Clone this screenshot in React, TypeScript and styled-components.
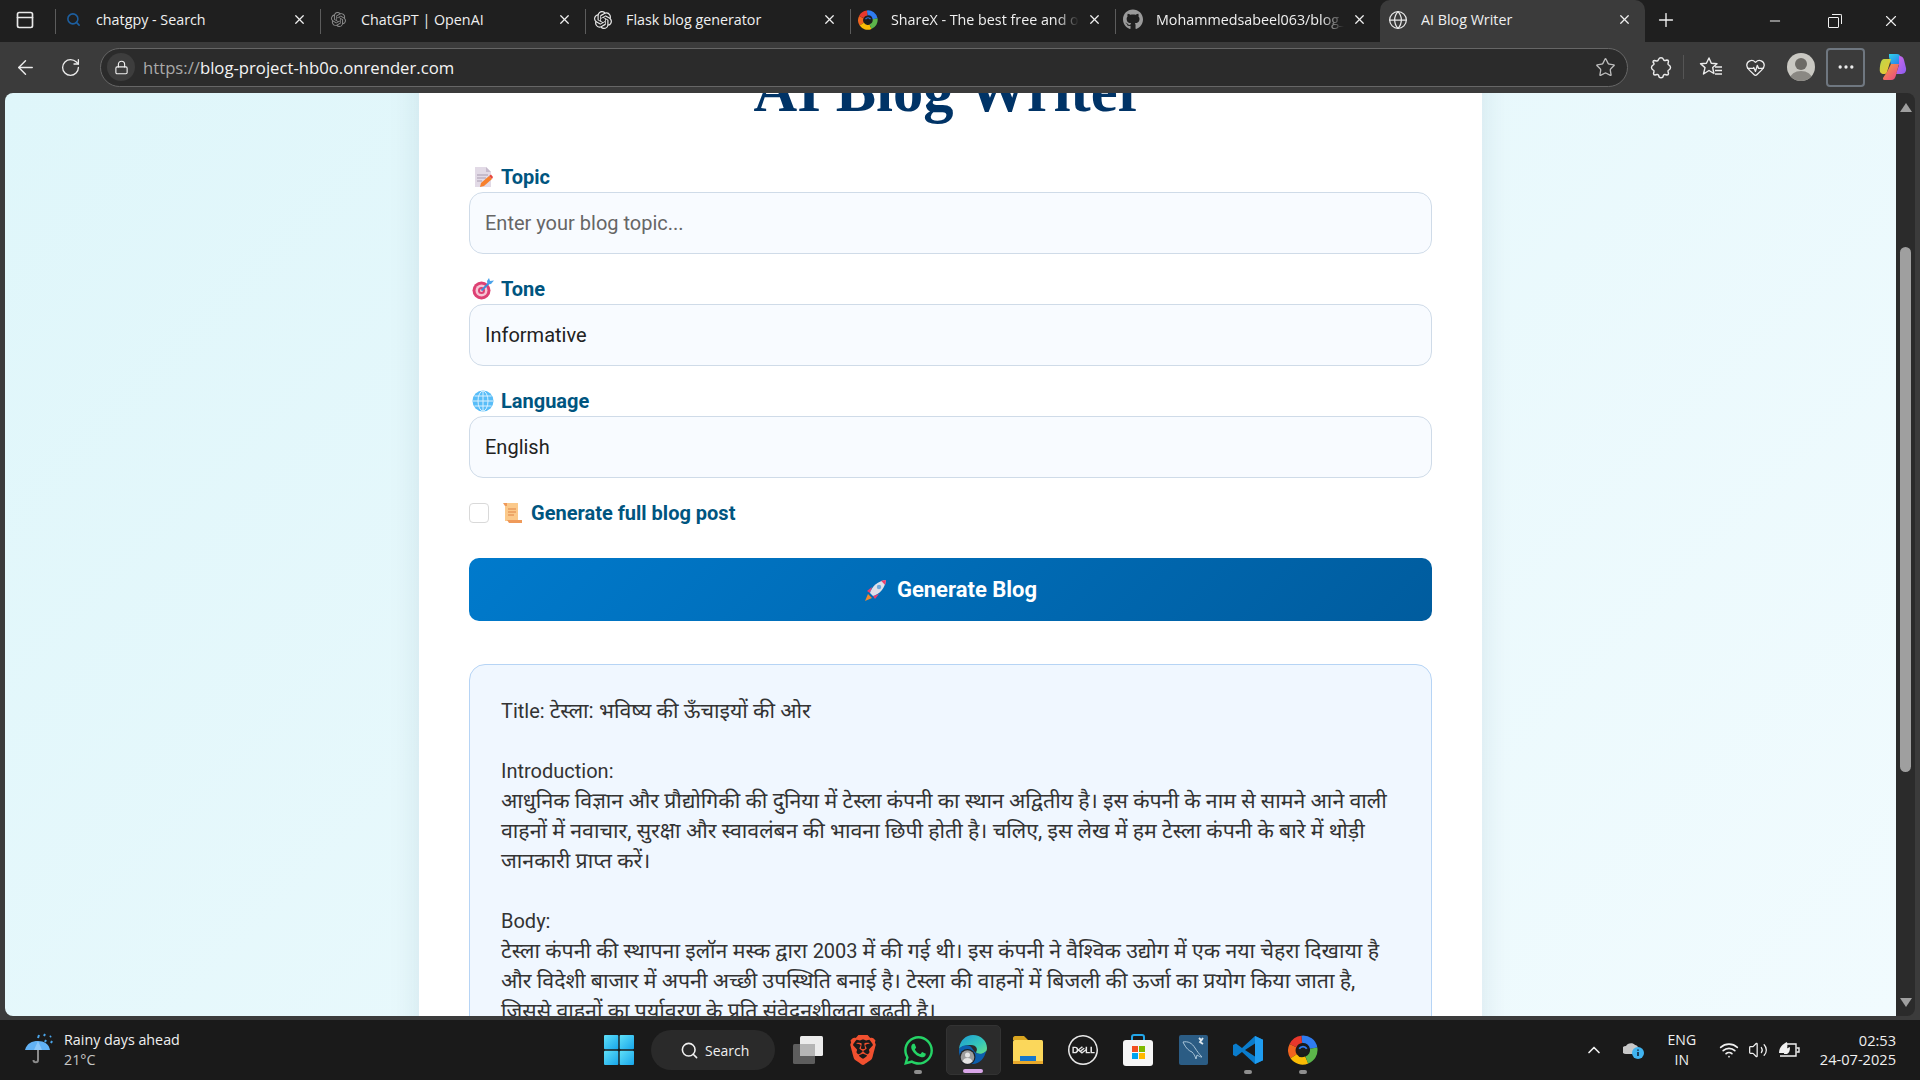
import React from 'react';
import styled, { createGlobalStyle, css } from 'styled-components';
import {
    ArrowLeft, ChevronUp, Ellipsis, Globe, HeartPulse, Lock, Minus, PanelTop, Plus,
    RotateCw, Search, Star, Volume2, Wifi, X,
} from 'lucide-react';
import { FaGithub, FaWhatsapp } from 'react-icons/fa';
import { SiBrave, SiDell, SiOpenai } from 'react-icons/si';

const GlobalStyle = createGlobalStyle`
    html, body {
        margin: 0;
        height: 100%;
        overflow: hidden;
        background: #3b3b3b;
    }
    * { box-sizing: border-box; }
`;

const UI_FONT = `"Open Sans", "Noto Sans", sans-serif`;
const PAGE_FONT = `Roboto, "Noto Sans", sans-serif`;

/** ____________________________________________________    DRAWN ICONS
 * */
const SwirlIcon = ({size = 20}: {size?: number}) => (
    <svg width={size} height={size} viewBox="0 0 24 24" fill="none">
        <path d="M11 3.500a8.500 8.500 0 0 1 9.500 7" stroke="#2f7cf0" strokeWidth="6"/>
        <path d="M4 8.500a8.500 8.500 0 0 1 7-5" stroke="#e8372c" strokeWidth="6"/>
        <path d="M4.500 17a8.500 8.500 0 0 1-.5-8.500" stroke="#f0641e" strokeWidth="6"/>
        <path d="M15 20a8.500 8.500 0 0 1-10.500-3" stroke="#fbbc05" strokeWidth="6"/>
        <path d="M20.500 10.500a8.500 8.500 0 0 1-5.500 9.500" stroke="#5cb54a" strokeWidth="6"/>
        <ellipse cx="12" cy="12" rx="4.200" ry="3.600" fill="#1c1c1c"/>
        <path d="M9 11a3.500 3.500 0 0 1 6 0" stroke="#2f7cf0" strokeWidth="1.400"/>
    </svg>
);

const CopilotIcon = () => (
    <svg width="28" height="30" viewBox="0 0 28 30">
        <defs>
            <linearGradient id="copA" x1="0" y1="0" x2="1" y2="1">
                <stop offset="0" stopColor="#2fd3e8"/>
                <stop offset="1" stopColor="#2a6cf0"/>
            </linearGradient>
            <linearGradient id="copB" x1="0" y1="0" x2="1" y2="1">
                <stop offset="0" stopColor="#d56be8"/>
                <stop offset="1" stopColor="#8a5cf0"/>
            </linearGradient>
            <linearGradient id="copC" x1="0" y1="0" x2="1" y2="1">
                <stop offset="0" stopColor="#b9d84a"/>
                <stop offset="1" stopColor="#f4c430"/>
            </linearGradient>
            <linearGradient id="copD" x1="0" y1="0" x2="1" y2="1">
                <stop offset="0" stopColor="#f8a13a"/>
                <stop offset="1" stopColor="#e8408a"/>
            </linearGradient>
        </defs>
        <path d="M10 2h8c2 0 3 1 3.600 3l2 8H12L10 5z" fill="url(#copA)"/>
        <path d="M20 4c3 0 4.400 1.600 5 4l2 8c.6 3-1 6-4.600 6H17l3-9z" fill="url(#copB)"/>
        <path d="M5 7h7l-4 13c-.4 1.600-1.400 2-3 2-3 0-4.600-2-4.200-5C1 13 2 7 5 7z" fill="url(#copC)"/>
        <path d="M8 20l4-8h8l-3 11c-.6 3-2 5-5 5H5.600c-2 0-2-2-1-3z" fill="url(#copD)"/>
    </svg>
);

const ExtensionIcon = () => (
    <svg width="24" height="24" viewBox="0 0 24 24" fill="none" stroke="#ececec" strokeWidth="1.400" strokeLinejoin="round">
        <path d="M9.500 4.500a2.700 2.700 0 0 1 5 0c.3.900 1 1.200 1.800 1l1.700-.5c1 0 1.500.5 1.500 1.500l-.5 2c-.2.800.2 1.400 1 1.700a2.500 2.500 0 0 1 0 4.600c-.8.300-1.200.9-1 1.700l.5 2c0 1-.5 1.500-1.500 1.500l-2-.5c-.8-.2-1.400.2-1.700 1a2.300 2.300 0 0 1-4.600 0c-.3-.8-.9-1.200-1.700-1l-2 .5c-1 0-1.500-.5-1.500-1.500l.5-2c.2-.8-.2-1.400-1-1.700a2.500 2.500 0 0 1 0-4.600c.8-.3 1.200-.9 1-1.700L4 7c0-1 .5-1.500 1.500-1.500l2.200.5c.8.200 1.500-.5 1.800-1.500z"/>
    </svg>
);

const FavoritesIcon = () => (
    <svg width="24" height="24" viewBox="0 0 24 24" fill="none" stroke="#ececec" strokeWidth="1.400" strokeLinejoin="round">
        <path d="M10 3l2.300 5.200 5.700.6-4.300 3.800 1.200 5.900-4.900-3-5.500 3.500 1.500-6.400L1.500 8.800l5.900-.6z"/>
        <path d="M16 12h7M16 15.500h7M16 19h7"/>
    </svg>
);

const MemoEmoji = () => (
    <svg width="20" height="22" viewBox="0 0 20 22">
        <path d="M2 1h11l5 5v15H2z" fill="#e2dae6"/>
        <path d="M13 1l5 5h-5z" fill="#c5bacc"/>
        <path d="M4 9h11M4 12h9M4 15h5" stroke="#a89bb0" strokeWidth="1.200"/>
        <path d="M7 21l1-4 8-7 3 3-8 7z" fill="#f7802d"/>
        <path d="M16 10l2-1.500 2 2.500-1 2z" fill="#e8453c"/>
    </svg>
);

const TargetEmoji = () => (
    <svg width="22" height="22" viewBox="0 0 22 22">
        <circle cx="9.500" cy="12.500" r="9" fill="#dd4073"/>
        <circle cx="9.500" cy="12.500" r="6" fill="#f6c4d4"/>
        <circle cx="9.500" cy="12.500" r="3.500" fill="#dd4073"/>
        <circle cx="9.500" cy="12.500" r="1.500" fill="#f6c4d4"/>
        <path d="M9.500 12.500L17 5" stroke="#3d8bd9" strokeWidth="1.800"/>
        <path d="M15 3l2-3 1 3 4-.5-3 3.500-3.500.5z" fill="#4aa3ea"/>
    </svg>
);

const GlobeEmoji = () => (
    <svg width="22" height="22" viewBox="0 0 22 22" fill="none">
        <circle cx="11" cy="11" r="10.500" fill="#58bdf8"/>
        <ellipse cx="11" cy="11" rx="5" ry="10" stroke="#d7f0ff" strokeWidth="1"/>
        <path d="M11 1v20M1 11h20M2.500 6h17M2.500 16h17" stroke="#d7f0ff" strokeWidth="1"/>
    </svg>
);

const ScrollEmoji = () => (
    <svg width="20" height="22" viewBox="0 0 20 22">
        <rect x="3" y="1" width="13" height="18" fill="#fbc98a"/>
        <path d="M1 1h4v3H3z" fill="#ef9a5a"/>
        <path d="M6 7h8M6 10h8M6 13h6" stroke="#e99a5c" strokeWidth="1.300"/>
        <path d="M5 18h15v3H7z" fill="#ef9a5a"/>
    </svg>
);

const RocketEmoji = () => (
    <svg width="24" height="24" viewBox="0 0 24 24">
        <path d="M4 16l-3 7 7-3z" fill="#f4892c"/>
        <path d="M3 13l5-4-2 6zM11 21l4-5-6 2z" fill="#ef3f6c"/>
        <path d="M6 15C8 8 14 3 22 2c-1 8-6 14-13 16z" fill="#dfe0ea"/>
        <path d="M17 2.800l5-.8-.8 5z" fill="#ef3f6c"/>
        <circle cx="15" cy="9" r="2.200" fill="#6fa8dc"/>
    </svg>
);

const UmbrellaIcon = () => (
    <svg width="30" height="34" viewBox="0 0 30 34" fill="none">
        <path d="M14 16v11c0 3-4.500 3-4.500 0" stroke="#8a8a8a" strokeWidth="2"/>
        <path d="M1 17C3 10 8 8 14 8s11 3 12 9z" fill="#62b2f5"/>
        <path d="M14 8l-4 9h8z" fill="#8cc8fa"/>
        <path d="M14 5l1-3M20 3l1-2M21 9l1-2M27 10l1-2M26 4l1-1" stroke="#4aa5ea" strokeWidth="2"/>
    </svg>
);

const WindowsLogo = () => (
    <svg width="30" height="30" viewBox="0 0 30 30">
        <defs>
            <linearGradient id="winA" x1="0" y1="0" x2="1" y2="1">
                <stop offset="0" stopColor="#5fe0f8"/>
                <stop offset="1" stopColor="#17a5ea"/>
            </linearGradient>
        </defs>
        <rect width="14.300" height="14.300" rx="1" fill="url(#winA)"/>
        <rect x="15.700" width="14.300" height="14.300" rx="1" fill="url(#winA)"/>
        <rect y="15.700" width="14.300" height="14.300" rx="1" fill="url(#winA)"/>
        <rect x="15.700" y="15.700" width="14.300" height="14.300" rx="1" fill="url(#winA)"/>
    </svg>
);

const TaskViewIcon = () => (
    <svg width="32" height="30" viewBox="0 0 32 30">
        <rect x="1" y="9" width="22" height="20" rx="1.500" fill="#5d5d5d"/>
        <rect x="8" y="1" width="23" height="20" rx="1.500" fill="#ececec"/>
        <rect x="8" y="9" width="15" height="12" fill="#b5b5b5"/>
    </svg>
);

const EdgeIcon = () => (
    <svg width="32" height="32" viewBox="0 0 32 32">
        <defs>
            <linearGradient id="edgeA" x1="0" y1="0" x2="1" y2="1">
                <stop offset="0" stopColor="#1c9ad6"/>
                <stop offset=".6" stopColor="#36c8b8"/>
                <stop offset="1" stopColor="#6be08a"/>
            </linearGradient>
        </defs>
        <path d="M2 15C3 6 9 1 16 1c8 0 14 6 14 13 0 4-3 6-7 6-2 0-4-1-4-2 2-2 1-7-5-7-6 0-10 2-12 4z" fill="url(#edgeA)"/>
        <path d="M2 15c2-3 7-5 11-3 3 2 3 5 6 7 3 1.500 7 1 10-2-1 7-7 13-13 13C8 30 1 24 2 15z" fill="#0c5fae"/>
        <circle cx="10.500" cy="23" r="8" fill="#1f2328"/>
        <circle cx="10.500" cy="23" r="6.800" fill="#9c9c9c"/>
        <circle cx="10.500" cy="21" r="2.500" fill="#e4e4e4"/>
        <path d="M5.500 27.500c.8-2.500 2.500-3.500 5-3.500s4.200 1 5 3.500a6.800 6.800 0 0 1-10 0z" fill="#e4e4e4"/>
    </svg>
);

const FolderIcon = () => (
    <svg width="32" height="30" viewBox="0 0 32 30">
        <path d="M1 3c0-1 1-2 2-2h9l4 4h-15z" fill="#d9a520"/>
        <rect x="1" y="5" width="30" height="24" rx="1.500" fill="#fbd75b"/>
        <rect x="1" y="26" width="30" height="3" fill="#e9a92b"/>
        <path d="M8 21h16v5H8z" fill="#1677cc"/>
    </svg>
);

const StoreIcon = () => (
    <svg width="30" height="32" viewBox="0 0 30 32" fill="none">
        <path d="M9 8V3c0-1 1-2 2-2h8c1 0 2 1 2 2v5" stroke="#23a6e8" strokeWidth="2"/>
        <rect y="6" width="30" height="26" rx="3" fill="#f6f6f6"/>
        <rect x="9" y="12" width="6" height="6" fill="#f25022"/>
        <rect x="16" y="12" width="6" height="6" fill="#7fba00"/>
        <rect x="9" y="19" width="6" height="6" fill="#00a4ef"/>
        <rect x="16" y="19" width="6" height="6" fill="#ffb900"/>
    </svg>
);

const MysqlIcon = () => (
    <svg width="29" height="30" viewBox="0 0 29 30" fill="none">
        <rect width="29" height="30" rx="2" fill="#2b5c84"/>
        <path d="M4 7c5-1 9 1 12 6 2 3 4 6 7 9-2 0-3-1-5-2l-1 4c-1-3-2-5-4-7-3-1-6-4-8-8 0-1-1-1-1-2z" stroke="#a9c4d8" strokeWidth="1"/>
        <path d="M20 3l3 3M24 3l-3 4 3 2" stroke="#dfe8ef" strokeWidth="1.800"/>
    </svg>
);

const VscodeIcon = () => (
    <svg width="32" height="32" viewBox="0 0 32 32">
        <path d="M23 2 10 14 4 9.500 1 11v10l3 1.500L10 18l13 12 8-3.800V5.800z" fill="#0a7ccc"/>
        <path d="M23 9.500 13 16l10 6.500z" fill="#1a1a1a"/>
        <path d="M23 2l8 3.800v20.400L23 30z" fill="#1f9cf0"/>
    </svg>
);

const CloudInfoIcon = () => (
    <svg width="22" height="22" viewBox="0 0 22 22">
        <path d="M3 15a4 4 0 0 1 0-8c1-3 7-4 9-1 2 0 4 2 3 5l-4 4z" fill="#c8c8c8"/>
        <circle cx="15" cy="14" r="6" fill="#40b4f0"/>
        <path d="M15 13v4M15 10.500v1.200" stroke="#10243a" strokeWidth="1.600"/>
    </svg>
);

const BatteryLeafIcon = () => (
    <svg width="22" height="18" viewBox="0 0 22 18" fill="none">
        <path d="M8 3h10v12H2" stroke="#f2f2f2" strokeWidth="1.400"/>
        <path d="M18.500 7H21v4h-2.500" stroke="#f2f2f2" strokeWidth="1.400"/>
        <path d="M1 12C1 6 5 3 9 1c1 5 0 9-3 11z" fill="#f2f2f2"/>
        <path d="M6 13C6 9 9 7 12 6c0 4-1 6-3 7z" fill="#f2f2f2"/>
    </svg>
);

/** ____________________________________________________    BROWSER FRAME
 * */
const Shell = styled.div`
    width: 1920px;
    height: 1080px;
    display: flex;
    flex-direction: column;
    overflow: hidden;
    font-family: ${UI_FONT};
    color: #f0f0f0;
`;

const TabStrip = styled.div`
    height: 42px;
    flex: none;
    display: flex;
    align-items: stretch;
    background: #1f1f1f;
`;

const SideButton = styled.div`
    width: 55px;
    display: flex;
    align-items: center;
    justify-content: center;
    padding: 0 6px 2px 0;
`;

const Tab = styled.div<{ $active?: boolean }>`
    position: relative;
    width: 265px;
    display: flex;
    align-items: center;
    padding: 0 0 3px 8px;
    font-size: 14.300px;
    ${({$active}) => $active ? css`
        background: #3b3b3b;
        border-radius: 10px 10px 0 0;
    ` : css`
        &::before {
            content: '';
            position: absolute;
            left: 0;
            top: 9px;
            height: 25px;
            width: 1px;
            background: #5c5c5c;
        }
    `}
`;

const Favicon = styled.span<{ $color?: string }>`
    width: 20px;
    flex: none;
    display: flex;
    justify-content: center;
    color: ${({$color}) => $color || '#e8e8e8'};
    margin-right: 13px;
`;

const TabTitle = styled.span<{ $fade?: boolean }>`
    width: 188px;
    flex: none;
    overflow: hidden;
    white-space: nowrap;
    ${({$fade}) => $fade && css`
        mask-image: linear-gradient(to right, #000 88%, transparent 100%);
    `}
`;

const TabClose = styled.span`
    margin-left: 8px;
    display: flex;
`;

const NewTab = styled.div`
    width: 42px;
    display: flex;
    align-items: center;
    justify-content: center;
    padding-bottom: 2px;
`;

const WindowControls = styled.div`
    margin-left: auto;
    display: flex;
    align-items: center;
`;

const WindowButton = styled.div`
    width: 58px;
    display: flex;
    justify-content: center;
`;

const RestoreGlyph = styled.span`
    position: relative;
    width: 11px;
    height: 11px;
    margin-top: 2px;
    border: 1px solid #f0f0f0;
    border-radius: 1px;

    &::after {
        content: '';
        position: absolute;
        top: -4px;
        right: -4px;
        width: 9px;
        height: 9px;
        border-top: 1px solid #f0f0f0;
        border-right: 1px solid #f0f0f0;
        border-radius: 0 2px 0 0;
    }
`;

const Toolbar = styled.div`
    height: 51px;
    flex: none;
    display: flex;
    align-items: center;
    padding: 0 0 1px 3px;
    background: #3b3b3b;
`;

const ToolButton = styled.div`
    width: 45px;
    height: 39px;
    flex: none;
    display: flex;
    align-items: center;
    justify-content: center;
    color: #ececec;
`;

const MoreButton = styled(ToolButton)`
    width: 39px;
    margin: 0 5px 0 3px;
    border: 2px solid #6f7780;
    border-radius: 4px;
`;

const AddressBar = styled.div`
    width: 1528px;
    height: 39px;
    flex: none;
    margin: 0 10px 0 7px;
    padding: 0 6px 0 6px;
    display: flex;
    align-items: center;
    background: #2b2b2b;
    border: 1px solid #666;
    border-radius: 20px;
`;

const LockPill = styled.span`
    width: 28px;
    height: 28px;
    flex: none;
    display: flex;
    align-items: center;
    justify-content: center;
    border-radius: 50%;
    background: #3d3d3d;
    margin-right: 8px;
`;

const UrlScheme = styled.span`
    color: #a9a9a9;
`;

const UrlText = styled.span`
    font-size: 16.700px;
    color: #f4f4f4;
    white-space: nowrap;
`;

const StarSlot = styled.span`
    margin-left: auto;
    margin-right: 5px;
    display: flex;
    color: #bdbdbd;
`;

const ToolDivider = styled.span`
    width: 1px;
    height: 24px;
    flex: none;
    margin-right: 4px;
    background: #555;
`;

const Avatar = styled.span`
    position: relative;
    width: 28px;
    height: 28px;
    overflow: hidden;
    border-radius: 50%;
    background: #c9c8c2;

    &::before {
        content: '';
        position: absolute;
        left: 8px;
        top: 5px;
        width: 12px;
        height: 12px;
        border-radius: 50%;
        background: #6d6b66;
    }

    &::after {
        content: '';
        position: absolute;
        left: 3px;
        top: 18px;
        width: 22px;
        height: 16px;
        border-radius: 50%;
        background: #8a8883;
    }
`;

/** ____________________________________________________    PAGE
 * */
const PageRow = styled.div`
    flex: 1;
    min-height: 0;
    display: flex;
    padding: 0 5px 4px 5px;
    background: #3b3b3b;
`;

const Viewport = styled.main`
    flex: 1;
    min-width: 0;
    overflow: hidden;
    border-radius: 8px 0 0 8px;
    background: linear-gradient(135deg, #dff6fa 0%, #f1fbfe 100%);
`;

const Card = styled.div`
    width: 1063px;
    height: 1100px;
    margin: -68px auto 0;
    padding: 0 50px;
    background: #fff;
    box-shadow: 0 0 30px rgba(0, 60, 90, 0.1);
`;

const Heading = styled.h1`
    margin: 0;
    padding: 0 3px 0 0;
    height: 131px;
    text-align: center;
    font-family: "Liberation Serif", serif;
    font-size: 60.500px;
    line-height: 131px;
    font-weight: 700;
    color: #003366;
`;

const Field = styled.div`
    margin-top: 23px;
    &:first-of-type { margin-top: 9px; }
`;

const Label = styled.label`
    height: 24px;
    margin-bottom: 3px;
    display: flex;
    align-items: center;
    font-family: ${PAGE_FONT};
    font-size: 20px;
    font-weight: 700;
    color: #00557f;
`;

const EmojiSlot = styled.span`
    width: 32px;
    flex: none;
    display: flex;
    justify-content: center;
    padding-right: 5px;
`;

const controlStyle = css`
    display: block;
    width: 100%;
    height: 62px;
    padding: 0 15px;
    border: 1.500px solid #cfdbe8;
    border-radius: 14px;
    background: #f8fbff;
    font-family: ${PAGE_FONT};
    font-size: 20px;
    color: #222;
    outline: none;
    appearance: none;
`;

const TextInput = styled.input`
    ${controlStyle}
    &::placeholder { color: #666; opacity: 1; }
`;

const Select = styled.select`
    ${controlStyle}
`;

const CheckRow = styled.label`
    height: 24px;
    margin-top: 23px;
    display: flex;
    align-items: center;
    font-family: ${PAGE_FONT};
    font-size: 20px;
    font-weight: 700;
    color: #00557f;
`;

const Checkbox = styled.input`
    width: 20px;
    height: 20px;
    margin: 0 13px 0 0;
    appearance: none;
    border: 1px solid #d9d9d9;
    border-radius: 4px;
    background: #fff;
`;

const CheckEmoji = styled.span`
    display: flex;
    margin-right: 9px;
`;

const GenerateButton = styled.button`
    width: 100%;
    height: 63px;
    margin-top: 33px;
    display: flex;
    align-items: center;
    justify-content: center;
    gap: 9px;
    border: 0;
    border-radius: 10px;
    background: linear-gradient(135deg, #007acc, #005c9e);
    font-family: ${PAGE_FONT};
    font-size: 22px;
    font-weight: 700;
    color: #fff;
`;

const Output = styled.section`
    margin-top: 43px;
    height: 500px;
    padding: 31px 31px;
    border: 1px solid #b6d4f5;
    border-radius: 16px;
    background: #f0f7ff;
    font-family: ${PAGE_FONT};
    font-size: 20px;
    line-height: 30px;
    color: #333;
    white-space: pre;
`;

const Deva = styled.span`
    font-size: 21.300px;
`;

/** ____________________________________________________    SCROLLBAR
 * */
const ScrollTrack = styled.div`
    width: 19px;
    flex: none;
    display: flex;
    flex-direction: column;
    align-items: center;
    border-radius: 0 8px 8px 0;
    background: #2b2b2b;
`;

const ScrollArrow = styled.span<{ $down?: boolean }>`
    width: 0;
    height: 0;
    margin-top: ${({$down}) => $down ? 'auto' : '10px'};
    margin-bottom: ${({$down}) => $down ? '9px' : '0'};
    border-left: 6.500px solid transparent;
    border-right: 6.500px solid transparent;
    ${({$down}) => $down
        ? 'border-top: 9px solid #9f9f9f;'
        : 'border-bottom: 9px solid #9f9f9f;'}
`;

const ScrollThumb = styled.span`
    width: 11px;
    height: 525px;
    margin-top: 135px;
    border-radius: 6px;
    background: #9f9f9f;
`;

/** ____________________________________________________    TASKBAR
 * */
const Taskbar = styled.footer`
    height: 60px;
    flex: none;
    display: flex;
    align-items: center;
    background: #1a1a1a;
    font-size: 14px;
`;

const Weather = styled.div`
    width: 591px;
    flex: none;
    display: flex;
    align-items: center;
    padding-left: 24px;
    gap: 10px;
`;

const WeatherText = styled.div`
    line-height: 20px;
    font-size: 14.300px;
`;

const Muted = styled.div`
    color: #c6c6c6;
`;

const TaskCenter = styled.div`
    display: flex;
    align-items: center;
    height: 100%;
`;

const TaskItem = styled.div<{ $active?: boolean; $dot?: boolean }>`
    position: relative;
    width: 55px;
    height: 50px;
    display: flex;
    align-items: center;
    justify-content: center;
    border-radius: 5px;
    ${({$active}) => $active && css`
        background: #2b2b2b;
        border: 1px solid #333;
    `}
    ${({$dot, $active}) => $dot && css`
        &::after {
            content: '';
            position: absolute;
            bottom: 1px;
            left: 50%;
            width: ${$active ? '20px' : '8px'};
            height: 4px;
            transform: translateX(-50%);
            border-radius: 2px;
            background: ${$active ? '#d9a6e8' : '#8e8e8e'};
        }
    `}
`;

const SearchPill = styled.div`
    width: 124px;
    height: 40px;
    margin: 0 5.500px 0 5px;
    padding-left: 29px;
    display: flex;
    align-items: center;
    gap: 6px;
    border-radius: 20px;
    background: #2a2a2a;
    font-size: 14px;
`;

const Tray = styled.div`
    margin-left: auto;
    height: 100%;
    display: flex;
    align-items: center;
    padding-right: 24px;
`;

const TraySlot = styled.span<{ $width: number }>`
    width: ${({$width}) => $width}px;
    flex: none;
    display: flex;
    justify-content: center;
`;

const LangBlock = styled.div`
    width: 46px;
    margin-right: 10px;
    text-align: center;
    line-height: 20px;
    font-size: 14px;
`;

const Clock = styled.div`
    margin-left: 15px;
    text-align: right;
    line-height: 19px;
    font-size: 14.600px;
`;

/** ____________________________________________________    DATA
 * */
const TABS = [
    {title: 'chatgpy - Search', icon: <Search size={15} strokeWidth={2.5}/>, color: '#1d5fa0'},
    {title: 'ChatGPT | OpenAI', icon: <SiOpenai size={15}/>, color: '#8c8c8c'},
    {title: 'Flask blog generator', icon: <SiOpenai size={18}/>},
    {title: 'ShareX - The best free and open source', icon: <SwirlIcon/>, fade: true},
    {title: 'Mohammedsabeel063/blog_generator', icon: <FaGithub size={21}/>, color: '#9a9a9a', fade: true},
];

const BLOG_TEXT = `Title: टेस्ला: भविष्य की ऊँचाइयों की ओर

Introduction:
आधुनिक विज्ञान और प्रौद्योगिकी की दुनिया में टेस्ला कंपनी का स्थान अद्वितीय है। इस कंपनी के नाम से सामने आने वाली
वाहनों में नवाचार, सुरक्षा और स्वावलंबन की भावना छिपी होती है। चलिए, इस लेख में हम टेस्ला कंपनी के बारे में थोड़ी
जानकारी प्राप्त करें।

Body:
टेस्ला कंपनी की स्थापना इलॉन मस्क द्वारा 2003 में की गई थी। इस कंपनी ने वैश्विक उद्योग में एक नया चेहरा दिखाया है
और विदेशी बाजार में अपनी अच्छी उपस्थिति बनाई है। टेस्ला की वाहनों में बिजली की ऊर्जा का प्रयोग किया जाता है,
जिससे वाहनों का पर्यावरण के प्रति संवेदनशीलता बढ़ती है।`;

// odd parts of the split are the hindi runs
const blogParts = BLOG_TEXT.split(/([\u0900-\u097F][\u0900-\u097F ,:]*)/);

export default function App() {
    return (
        <Shell>
            <GlobalStyle/>

            <TabStrip>
                <SideButton><PanelTop size={20} color="#e8e8e8"/></SideButton>
                {TABS.map(tab => (
                    <Tab key={tab.title}>
                        <Favicon $color={tab.color}>{tab.icon}</Favicon>
                        <TabTitle $fade={tab.fade}>{tab.title}</TabTitle>
                        <TabClose><X size={15}/></TabClose>
                    </Tab>
                ))}
                <Tab $active>
                    <Favicon><Globe size={20} strokeWidth={1.5}/></Favicon>
                    <TabTitle>AI Blog Writer</TabTitle>
                    <TabClose><X size={15}/></TabClose>
                </Tab>
                <NewTab><Plus size={22} strokeWidth={1.5}/></NewTab>
                <WindowControls>
                    <WindowButton><Minus size={16} strokeWidth={1.5}/></WindowButton>
                    <WindowButton><RestoreGlyph/></WindowButton>
                    <WindowButton><X size={18} strokeWidth={1.5}/></WindowButton>
                </WindowControls>
            </TabStrip>

            <Toolbar>
                <ToolButton><ArrowLeft size={23} strokeWidth={1.5}/></ToolButton>
                <ToolButton><RotateCw size={21} strokeWidth={1.5}/></ToolButton>
                <AddressBar>
                    <LockPill><Lock size={15} strokeWidth={1.8}/></LockPill>
                    <UrlText><UrlScheme>https://</UrlScheme>blog-project-hb0o.onrender.com</UrlText>
                    <StarSlot><Star size={21} strokeWidth={1.5}/></StarSlot>
                </AddressBar>
                <ToolButton><ExtensionIcon/></ToolButton>
                <ToolDivider/>
                <ToolButton><FavoritesIcon/></ToolButton>
                <ToolButton><HeartPulse size={21} strokeWidth={1.5}/></ToolButton>
                <ToolButton><Avatar/></ToolButton>
                <MoreButton><Ellipsis size={20}/></MoreButton>
                <ToolButton><CopilotIcon/></ToolButton>
            </Toolbar>

            <PageRow>
                <Viewport>
                    <Card>
                        <Heading>AI Blog Writer</Heading>

                        <Field>
                            <Label><EmojiSlot><MemoEmoji/></EmojiSlot>Topic</Label>
                            <TextInput placeholder="Enter your blog topic..."/>
                        </Field>

                        <Field>
                            <Label><EmojiSlot><TargetEmoji/></EmojiSlot>Tone</Label>
                            <Select defaultValue="Informative"><option>Informative</option></Select>
                        </Field>

                        <Field>
                            <Label><EmojiSlot><GlobeEmoji/></EmojiSlot>Language</Label>
                            <Select defaultValue="English"><option>English</option></Select>
                        </Field>

                        <CheckRow>
                            <Checkbox type="checkbox"/>
                            <CheckEmoji><ScrollEmoji/></CheckEmoji>
                            Generate full blog post
                        </CheckRow>

                        <GenerateButton type="button"><RocketEmoji/>Generate Blog</GenerateButton>

                        <Output lang="hi">
                            {blogParts.map((part, i) => i % 2 ? <Deva key={i}>{part}</Deva> : part)}
                        </Output>
                    </Card>
                </Viewport>
                <ScrollTrack>
                    <ScrollArrow/>
                    <ScrollThumb/>
                    <ScrollArrow $down/>
                </ScrollTrack>
            </PageRow>

            <Taskbar>
                <Weather>
                    <UmbrellaIcon/>
                    <WeatherText>
                        Rainy days ahead
                        <Muted>21°C</Muted>
                    </WeatherText>
                </Weather>

                <TaskCenter>
                    <TaskItem><WindowsLogo/></TaskItem>
                    <SearchPill><Search size={19} strokeWidth={2}/>Search</SearchPill>
                    <TaskItem><TaskViewIcon/></TaskItem>
                    <TaskItem><SiBrave size={30} color="#f1502f"/></TaskItem>
                    <TaskItem $dot><FaWhatsapp size={33} color="#25d366"/></TaskItem>
                    <TaskItem $active $dot><EdgeIcon/></TaskItem>
                    <TaskItem><FolderIcon/></TaskItem>
                    <TaskItem><SiDell size={30} color="#e8e8e8"/></TaskItem>
                    <TaskItem><StoreIcon/></TaskItem>
                    <TaskItem><MysqlIcon/></TaskItem>
                    <TaskItem $dot><VscodeIcon/></TaskItem>
                    <TaskItem $dot><SwirlIcon size={30}/></TaskItem>
                </TaskCenter>

                <Tray>
                    <TraySlot $width={30}><ChevronUp size={20}/></TraySlot>
                    <TraySlot $width={50}><CloudInfoIcon/></TraySlot>
                    <LangBlock>ENG<br/>IN</LangBlock>
                    <TraySlot $width={28}><Wifi size={20}/></TraySlot>
                    <TraySlot $width={30}><Volume2 size={20} strokeWidth={1.5}/></TraySlot>
                    <TraySlot $width={32}><BatteryLeafIcon/></TraySlot>
                    <Clock>02:53<br/>24-07-2025</Clock>
                </Tray>
            </Taskbar>
        </Shell>
    );
}
